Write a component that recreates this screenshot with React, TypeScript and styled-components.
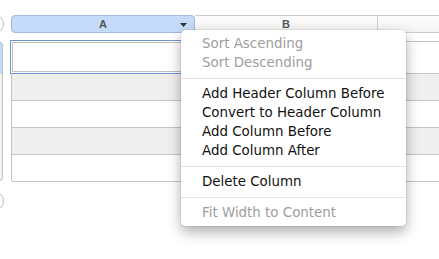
import React from "react";
import styled, { createGlobalStyle } from "styled-components";

const Global = createGlobalStyle`
  html, body { margin: 0; padding: 0; background: #fff; }
  body { width: 439px; height: 259px; overflow: hidden; font-family: "Liberation Sans", Arial, sans-serif; }
`;

const Page = styled.div`
  position: relative;
  width: 439px;
  height: 259px;
  overflow: hidden;
  display: grid;
  grid-template-columns: 11px 1fr;
  grid-template-rows: 15px 18px 8px 140px 9px 22px;
`;

const Gutter = styled.div<{ $row: number }>`
  grid-column: 1;
  grid-row: ${(p) => p.$row};
  position: relative;
  display: flex;
  align-items: center;
`;

const Circle = styled.div`
  flex: none;
  width: 20px;
  height: 20px;
  margin-left: -16px;
  border-radius: 50%;
  border: 1px solid #bdbdbd;
  background: #fff;
  box-sizing: border-box;
`;

const RowBar = styled.div`
  flex: none;
  align-self: stretch;
  width: 16px;
  margin-left: -13px;
  margin-top: 1px;
  border: 1px solid #c2c2c2;
  border-radius: 4px;
  box-sizing: border-box;
  background: linear-gradient(to bottom, #c6dbf9 0, #c6dbf9 31px, #f4f4f4 31px);
  border-color: #a9c0e4 #c2c2c2 #c2c2c2 #c2c2c2;
`;

const HeaderRow = styled.div`
  grid-column: 2;
  grid-row: 2;
  display: flex;
  width: 480px;
`;

const HeaderCell = styled.div<{ $w?: number; $sel?: boolean }>`
  position: relative;
  flex: ${(p) => (p.$w ? `0 0 ${p.$w}px` : "1 1 auto")};
  box-sizing: border-box;
  height: 18px;
  display: flex;
  align-items: center;
  justify-content: center;
  font-weight: bold;
  font-size: 11px;
  color: #555;
  ${(p) =>
    p.$sel
      ? `background: #c6dbf9; border: 1px solid #9fb9e0; border-radius: 4px;`
      : `background: linear-gradient(#fdfdfd, #f3f3f3); border-top: 1px solid #cdcdcd; border-bottom: 1px solid #cdcdcd; border-right: 1px solid #cdcdcd;`}
`;

const Caret = styled.svg`
  position: absolute;
  right: 7px;
  top: 7px;
`;

const Body = styled.div`
  grid-column: 2;
  grid-row: 4;
  width: 480px;
  display: flex;
  flex-direction: column;
  border-top: 1px solid #c4c4c4;
  border-left: 1px solid #c4c4c4;
  box-sizing: border-box;
`;

const Row = styled.div<{ $h: number; $alt?: boolean }>`
  display: flex;
  height: ${(p) => p.$h}px;
  background: ${(p) => (p.$alt ? "#efefef" : "#fff")};
  border-bottom: 1px solid #c4c4c4;
  flex: none;
`;

const SelCell = styled.div`
  flex: 0 0 184px;
  margin: -2px 0 -1px -2px;
  border: 1px solid #6f94d6;
  box-shadow: inset 0 0 0 1px #fff, inset 0 0 0 2px #c0c0c0;
  background: #fff;
`;

const Menu = styled.div`
  position: absolute;
  left: 181px;
  top: 30px;
  width: 225px;
  box-sizing: border-box;
  padding: 4px 0;
  background: rgba(255, 255, 255, 0.98);
  border-radius: 5px;
  box-shadow: 0 0 0 1px rgba(0, 0, 0, 0.06), 0 6px 14px rgba(0, 0, 0, 0.32);
  font-family: "DejaVu Sans", Verdana, sans-serif;
  font-size: 13.4px;
`;

const Item = styled.div<{ $disabled?: boolean }>`
  height: 19px;
  line-height: 19px;
  padding-left: 21px;
  color: ${(p) => (p.$disabled ? "#9d9d9d" : "#111")};
  white-space: nowrap;
`;

const Sep = styled.div`
  height: 1px;
  margin: 6px 0 5px;
  background: #e3e3e3;
`;

export default function App() {
  return (
    <>
      <Global />
      <Page>
        <Gutter $row={2}>
          <Circle />
        </Gutter>
        <HeaderRow>
          <HeaderCell $w={184} $sel>
            A
            <Caret width="7" height="4" viewBox="0 0 7 4">
              <path d="M0 0 L7 0 L3.5 4 Z" fill="#333" />
            </Caret>
          </HeaderCell>
          <HeaderCell $w={183}>B</HeaderCell>
          <HeaderCell />
        </HeaderRow>
        <Gutter $row={4}>
          <RowBar />
        </Gutter>
        <Body>
          <Row $h={31}>
            <SelCell />
          </Row>
          <Row $h={26} $alt />
          <Row $h={26} />
          <Row $h={26} $alt />
          <Row $h={26} />
        </Body>
        <Gutter $row={6}>
          <Circle />
        </Gutter>
        <Menu>
          <Item $disabled>Sort Ascending</Item>
          <Item $disabled>Sort Descending</Item>
          <Sep />
          <Item>Add Header Column Before</Item>
          <Item>Convert to Header Column</Item>
          <Item>Add Column Before</Item>
          <Item>Add Column After</Item>
          <Sep />
          <Item>Delete Column</Item>
          <Sep />
          <Item $disabled>Fit Width to Content</Item>
        </Menu>
      </Page>
    </>
  );
}
